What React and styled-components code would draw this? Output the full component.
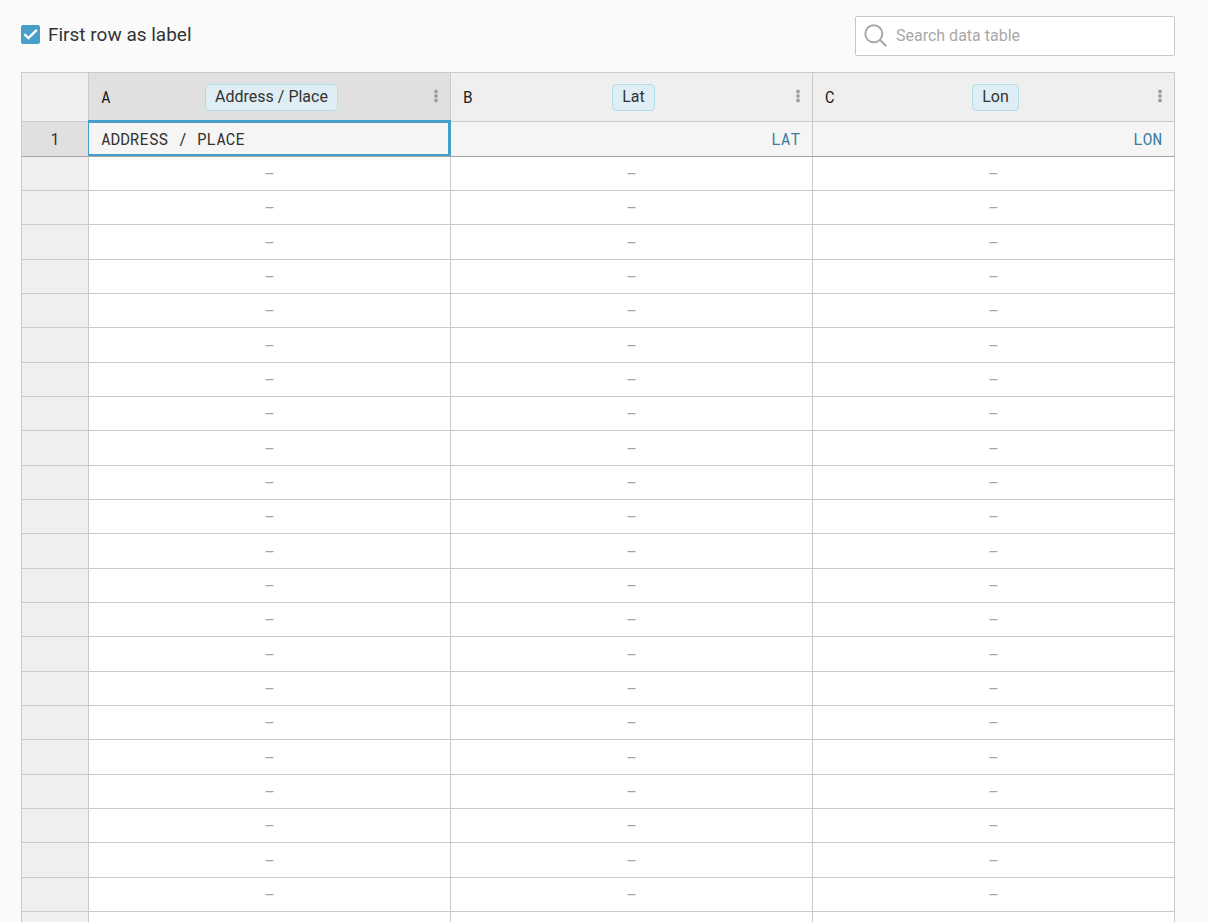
import React, { useState } from 'react';
import styled, { createGlobalStyle } from 'styled-components';

const columns = [
  { letter: 'A', name: 'Address / Place' },
  { letter: 'B', name: 'Lat', numeric: true },
  { letter: 'C', name: 'Lon', numeric: true },
];

const emptyRows = Array.from({ length: 23 }, (_, i) => i + 2);

const GlobalStyle = createGlobalStyle`
  * {
    box-sizing: border-box;
  }

  body {
    margin: 0;
    background: #fafafa;
    color: #333;
    font-family: Roboto, sans-serif;
    font-size: 16px;
  }
`;

const Page = styled.main`
  height: 100vh;
  overflow: hidden;
  padding: 16px 33px 0 21px;
`;

const Toolbar = styled.div`
  display: flex;
  justify-content: space-between;
  margin-bottom: 16px;
`;

const CheckLabel = styled.label`
  display: flex;
  align-items: center;
  height: 37px;
  gap: 8px;
  font-size: 19px;
`;

const CheckBox = styled.span`
  display: grid;

  input, svg {
    grid-area: 1 / 1;
    width: 19px;
    height: 19px;
    margin: 0;
  }

  input {
    appearance: none;
    border: 1px solid #479fc9;
    border-radius: 2px;
    background: #fff;
  }

  input:checked {
    background: #479fc9;
  }

  svg {
    pointer-events: none;
  }
`;

const SearchBox = styled.label`
  display: flex;
  align-items: center;
  width: 320px;
  height: 40px;
  padding: 0 8px;
  gap: 8px;
  background: #fff;
  border: 1px solid #c8c8c8;
  border-radius: 2px;

  svg {
    flex: none;
  }

  input {
    flex: 1;
    min-width: 0;
    padding: 0 0 2px;
    border: 0;
    outline: 0;
    background: none;
    color: #333;
    font: inherit;
  }

  input::placeholder {
    color: #a8a8a8;
    opacity: 1;
  }
`;

const Table = styled.table`
  width: 100%;
  table-layout: fixed;
  border-collapse: separate;
  border-spacing: 0;
  border-top: 1px solid #cacaca;
  border-left: 1px solid #cacaca;
  background: #fff;

  th, td {
    padding: 0;
    font-weight: 400;
    border-right: 1px solid #cacaca;
    border-bottom: 1px solid #cacaca;
  }
`;

const GutterCol = styled.col`
  width: 67px;
`;

const HeadCell = styled.th`
  height: 49px;
  background: ${(props) => (props.$active ? '#e0e0e0' : '#efefef')};
`;

const HeadContent = styled.div`
  display: grid;
  grid-template-columns: 1fr auto 1fr;
  align-items: center;
  padding: 0 8px 0 12px;
`;

const Letter = styled.span`
  padding-bottom: 2px;
  text-align: left;
  color: #222;
  font-family: "Roboto Mono", "Liberation Mono", monospace;
`;

const NameChip = styled.span`
  height: 27px;
  padding: 0 9px;
  line-height: 23px;
  background: #dfeef4;
  border: 1px solid #b4dcea;
  border-radius: 4px;
`;

const MenuButton = styled.button`
  justify-self: end;
  display: flex;
  justify-content: center;
  width: 12px;
  padding: 0 0 3px;
  border: 0;
  background: none;
`;

const RowNumber = styled.th`
  background: ${(props) => (props.$active ? '#e0e0e0' : '#efefef')};
`;

const LabelRow = styled.tr`
  height: 35px;

  && th, && td {
    border-bottom-color: #a4a4a4;
  }
`;

const LabelCell = styled.td`
  position: relative;
  background: #f5f5f5;

  &&& {
    padding: 0 12px 2px;
  }

  color: ${(props) => (props.$numeric ? '#3b7f9f' : '#333')};
  font-family: "Roboto Mono", "Liberation Mono", monospace;
  text-align: ${(props) => (props.$numeric ? 'right' : 'left')};

  /* selection frame, drawn over the neighbouring grid lines */
  &::after {
    content: ${(props) => (props.$selected ? '""' : 'none')};
    position: absolute;
    inset: -2px -1px 0 -1px;
    border: solid #479fc9;
    border-width: 3px 3px 2px 1px;
  }
`;

const EmptyBody = styled.tbody`
  tr {
    height: 34px;
  }

  tr:nth-child(3n) {
    height: 35px;
  }

  && td {
    padding-top: 2px;
    color: #a4a4a4;
    text-align: center;
  }
`;

const DotsIcon = () => (
  <svg width="4" height="14" viewBox="0 0 4 14" fill="#a0a0a0" aria-hidden="true">
    <circle cx="2" cy="2.5" r="1.9" />
    <circle cx="2" cy="7" r="1.9" />
    <circle cx="2" cy="11.5" r="1.9" />
  </svg>
);

const SearchIcon = () => (
  <svg width="24" height="24" viewBox="0 0 24 24" fill="none" stroke="#a6a6a6" strokeWidth="1.9" strokeLinecap="round" aria-hidden="true">
    <circle cx="9.8" cy="9.8" r="8.5" />
    <path d="M16 16L21.6 21.5" />
  </svg>
);

export default function App() {
  const [labelRow, setLabelRow] = useState(true);
  const [query, setQuery] = useState('');

  return (
    <Page>
      <GlobalStyle />
      <Toolbar>
        <CheckLabel>
          <CheckBox>
            <input type="checkbox" checked={labelRow} onChange={(e) => setLabelRow(e.target.checked)} />
            <svg viewBox="0 0 19 19" fill="none" stroke="#fff" strokeWidth="2.5" aria-hidden="true">
              <path d="M3.3 9.2L7.4 13.1L15.8 4.8" />
            </svg>
          </CheckBox>
          First row as label
        </CheckLabel>
        <SearchBox>
          <SearchIcon />
          <input
            type="text"
            aria-label="Search data table"
            placeholder="Search data table"
            value={query}
            onChange={(e) => setQuery(e.target.value)}
          />
        </SearchBox>
      </Toolbar>
      <Table>
        <colgroup>
          <GutterCol />
          {columns.map((col) => <col key={col.letter} />)}
        </colgroup>
        <thead>
          <tr>
            <HeadCell />
            {columns.map((col) => (
              <HeadCell key={col.letter} scope="col" $active={col.letter === 'A'}>
                <HeadContent>
                  <Letter>{col.letter}</Letter>
                  <NameChip>{col.name}</NameChip>
                  <MenuButton type="button" aria-label={`Column ${col.letter} options`}>
                    <DotsIcon />
                  </MenuButton>
                </HeadContent>
              </HeadCell>
            ))}
          </tr>
        </thead>
        <tbody>
          <LabelRow>
            <RowNumber scope="row" $active>1</RowNumber>
            {columns.map((col) => (
              <LabelCell key={col.letter} $numeric={col.numeric} $selected={col.letter === 'A'}>
                {col.name.toUpperCase()}
              </LabelCell>
            ))}
          </LabelRow>
        </tbody>
        <EmptyBody>
          {emptyRows.map((row) => (
            <tr key={row}>
              <RowNumber />
              {columns.map((col) => <td key={col.letter}>–</td>)}
            </tr>
          ))}
        </EmptyBody>
      </Table>
    </Page>
  );
}
